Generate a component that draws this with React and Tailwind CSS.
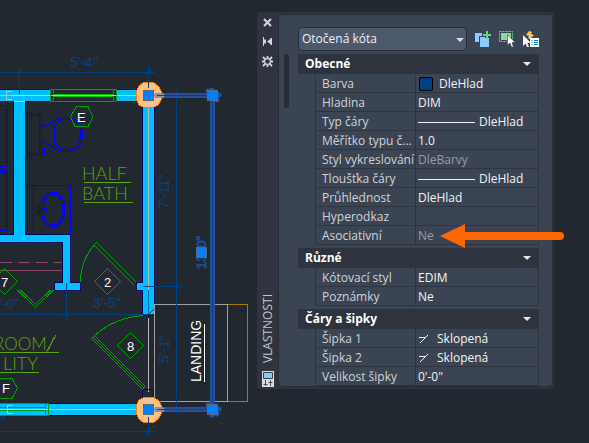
import { useState } from 'react';

const SECTIONS = [
  {
    title: 'Obecné',
    rows: [
      { label: 'Barva', value: 'DleHlad', kind: 'swatch' },
      { label: 'Hladina', value: 'DIM' },
      { label: 'Typ čáry', value: 'DleHlad', kind: 'line' },
      { label: 'Měřítko typu č...', value: '1.0' },
      { label: 'Styl vykreslování', value: 'DleBarvy', muted: true },
      { label: 'Tloušťka čáry', value: 'DleHlad', kind: 'line' },
      { label: 'Průhlednost', value: 'DleHlad' },
      { label: 'Hyperodkaz', value: '' },
      { label: 'Asociativní', value: 'Ne', muted: true, pointer: true },
    ],
  },
  {
    title: 'Různé',
    rows: [
      { label: 'Kótovací styl', value: 'EDIM' },
      { label: 'Poznámky', value: 'Ne' },
    ],
  },
  {
    title: 'Čáry a šipky',
    rows: [
      { label: 'Šipka 1', value: 'Sklopená', kind: 'tick' },
      { label: 'Šipka 2', value: 'Sklopená', kind: 'tick' },
      { label: 'Velikost šipky', value: "0'-0\"" },
    ],
  },
];

const GRID_XS = [10, 22, 34, 47, 59, 71, 84, 96, 108, 119, 131, 168, 180, 192, 204, 221];
const GRID_YS = [81, 109, 395, 423];
const GRIPS = [
  [148, 95],
  [212, 95],
  [201, 252],
  [148, 409],
  [212, 409],
];

function Diamond({ x, y, label }) {
  return (
    <g>
      <path d={`M${x - 13} ${y}L${x} ${y - 13}L${x + 13} ${y}L${x} ${y + 13}Z`} fill="none" stroke="#00a000" />
      <text x={x} y={y + 5} textAnchor="middle" fontSize="13" fill="#fff">
        {label}
      </text>
    </g>
  );
}

function FloorPlan() {
  return (
    <svg
      width="257"
      height="443"
      viewBox="0 0 257 443"
      className="block shrink-0 font-['Liberation_Sans',sans-serif]"
      role="img"
      shapeRendering="crispEdges"
    >
      {/* snap grid */}
      <g fill="#0a4a80">
        {GRID_YS.map((y) => GRID_XS.map((x) => <rect key={`${x}-${y}`} x={x} y={y} width="1" height="1" />))}
      </g>

      {/* walls */}
      <g fill="#00bfff" stroke="#000a60">
        <rect x="-2" y="89.5" width="140" height="12" />
        <rect x="-2" y="403.5" width="140" height="12" />
        <rect x="142.5" y="107.5" width="12" height="208" />
        <path d="M13.5 101V234.5H-2V242.5H62.5V282.5H54.5V290.5H80.5V282.5H70.5V234.5H25.5V101" />
        <path d="M142.5 282.5H136.5V290.5H142.5" />
      </g>
      <path d="M14 101.5H25M148.5 108V290M148.5 318V392" stroke="#b8b8b8" fill="none" />
      <path d="M0 95.5H138M0 409.5H138" stroke="#b4cfd8" />
      <path d="M14 96h11v8h-11z" fill="#00bfff" />
      <path d="M14 95.5H25M14 101.5H25" stroke="#b8d8e0" />
      <path d="M148.5 290V315" stroke="#0073b8" />
      <path d="M142.5 389.5h11v8h-11z" fill="none" stroke="#0a0a58" />

      {/* windows */}
      <g fill="#212830" stroke="#00a000">
        <rect x="50.5" y="89.5" width="66" height="12" />
        <path d="M53.5 90V102M113.5 90V102" />
        <rect x="-2" y="403.5" width="50" height="12" fill="#00bfff" />
        <path d="M45.5 404V415" />
      </g>
      <path d="M54 95.5H113" stroke="#00c000" strokeWidth="3" />
      <path d="M51 95.5H116" stroke="#9fdc9f" />
      <path d="M0 407.5H45M0 410.5H45" stroke="#00a000" />
      <path d="M0 409.5H48" stroke="#b4cfd8" />
      <path d="M12 91.5H6.5V99.5H12M0 95.5H11M13 405.5H7.5V413.5H13" fill="none" stroke="#d0b8b0" />

      {/* fixtures */}
      <g fill="none" stroke="#0000ff">
        <path d="M0 105.5H7.5V166.5H0M5.5 106V166M0 170.5H7.5V230.5H0M0 172.5H5.5V230" />
        <rect x="25.5" y="113.5" width="16" height="42" />
        <rect x="27.5" y="115.5" width="12" height="38" />
        <rect x="41.5" y="148.5" width="3" height="6" />
        <path d="M42 126.5L48 124.5Q58 117.500 66 117.500C77 117.500 82.500 124 82.500 134C82.500 145 77 151.500 66 151.500Q58 151.500 50 145L42 142.500" />
        <path d="M54.5 127V142Q58 149.500 66 149.500C76 149.500 80.500 143 80.500 134C80.500 125 75 119.500 66 119.500Q58 119.500 54.500 127" />
        <rect x="25.5" y="185.5" width="45" height="49" />
        <path d="M33.5 186V234" />
        <ellipse cx="53" cy="209.500" rx="12" ry="17.500" />
        <ellipse cx="53" cy="209.500" rx="10" ry="15.500" />
        <path d="M37.5 205.500H41V213.500H37.500ZM41 208.500H46V211.500H37M39.500 205V214" />
      </g>
      <path d="M0 234.500H14M25 234.500H71" stroke="#000a60" />

      {/* shelf lines */}
      <path d="M0 262.500H12M18 262.500H30M36 262.500H48M54 262.500H62M0 270.500H62" stroke="#8a4a62" />

      {/* doors */}
      <g fill="none" stroke="#00a000">
        <path d="M80.500 282Q80.500 259 96.500 242.500L136.500 282.500M94.500 245.500L134.500 285.500M96.500 242.500L94 245.500" />
        <path d="M17.500 290L35.500 307.500L53.500 290M20.500 290L35.500 304.500L50.500 290" />
        <path d="M143 315.500Q112 318 91.500 338.500L142.500 389.500L145.500 386.500L95.500 336.500M93.500 337.500L144 388" />
        <path d="M76.500 106.500H88L93 117L88 126.500H75L70.500 117Z" />
        <path d="M0 378.500H12L17.500 388L12 398.500H0" />
      </g>
      <text x="77" y="122" fontSize="13" fill="#fff">E</text>
      <text x="2" y="393" fontSize="13" fill="#fff">F</text>
      <Diamond x={4.5} y={281.5} label="7" />
      <Diamond x={107.5} y={281.5} label="2" />
      <Diamond x={130.5} y={345.5} label="8" />

      {/* room names */}
      <g fill="#5ca600" fontSize="18" className="font-['Lato',sans-serif] font-light">
        <text x="82" y="180">HALF</text>
        <text x="82" y="200">BATH</text>
        <text x="-6" y="350" fontSize="17">ROOM</text>
        <text x="47" y="350">/</text>
        <text x="38" y="370" textAnchor="end">LITY</text>
        <path d="M84 182.500H131M84 202.500H133M0 352.500H59M0 372.500H39M46 353L56 335" stroke="#5ca600" />
      </g>

      {/* landing */}
      <path d="M227.500 304.500H247.500V401.500H227.500" fill="none" stroke="#a87800" />
      <rect x="154.500" y="304.500" width="73" height="97" fill="none" stroke="#a0a0a0" />
      <text transform="translate(201 382) rotate(-90)" fontSize="14" fill="#fff">LANDING</text>
      <path d="M204.500 324V382" stroke="#fff" />

      {/* dimensions */}
      <g fill="none" stroke="#004080">
        <path d="M0 72.500H155M19.500 66V94M15 77L25 67M148.500 66V88M143 77L154 67" />
        <path d="M0 314.500H154M66.500 283V321M61 319L71 309M143 320L154 309" />
        <path d="M0 431.500H155M148.500 417V437M143 436L154 426" />
        <path d="M176.500 89V415M171 90L182 101M150 286.500H183M171 281L182 292M171 404L182 415M143 286.500H150" />
      </g>
      <g fill="#0d4080" fontSize="14">
        <text x="70" y="67">5'-4"</text>
        <text x="93" y="308">3'-5"</text>
        <text x="0" y="308" fontSize="13">'-0"</text>
        <text x="1" y="426">"</text>
        <text transform="translate(169 209) rotate(-90)">7'-11"</text>
        <text transform="translate(169 363) rotate(-90)">5'-1"</text>
      </g>

      {/* association markers */}
      <g fill="#ffc080" stroke="#ff8000">
        <path d="M143.500 82.500H153.500L158.500 86.500L161.500 91.500V99.500L158.500 104.500L153.500 107.500H143.500L138.500 104.500L136.500 99.500V91.500L138.500 86.500Z" />
        <path d="M143.500 397.500H153.500L158.500 400.500L161.500 405.500V413.500L158.500 418.500L153.500 422.500H143.500L138.500 418.500L136.500 413.500V405.500L138.500 400.500Z" />
      </g>
      <path d="M148.500 66V88M148.500 417V437" stroke="#004080" />
      <path d="M137 95.500H143M137 409.500H143M148.500 101V107M148.500 398V404" stroke="#d8c8b8" />

      {/* selected dimension */}
      <g fill="none" shapeRendering="auto">
        <path d="M157 95.500H212.500V409.500H157" stroke="#294f99" strokeWidth="5" strokeLinecap="round" />
        <path d="M157 95.500H162M157 409.500H162" stroke="#8c8fae" strokeWidth="5" strokeLinecap="round" />
        <path d="M157 95.500H212.500V409.500H157" stroke="#0c3f83" />
        <path d="M208 91L217 100M212 90V99M212 95H219M208 405L217 414M212 409H219M212 409V415" stroke="#294f99" strokeWidth="5" strokeLinecap="round" />
      </g>
      <text transform="translate(206 269) rotate(-90)" fontSize="13" fill="#2a5fb0" stroke="#22488c" strokeWidth="1">
        13'-0"
      </text>

      {GRIPS.map(([x, y]) => (
        <rect key={`${x}-${y}`} x={x - 4.5} y={y - 4.5} width="10" height="10" fill="#0080ff" stroke="#5c6a7c" />
      ))}
    </svg>
  );
}

function PaletteBar() {
  return (
    <div className="flex w-[21px] shrink-0 flex-col items-center pt-1">
      <button type="button" aria-label="Zavřít">
        <svg width="9" height="9" viewBox="0 0 9 9" className="block" stroke="#d4d6d9" strokeWidth="2">
          <path d="M1 1L8 8M8 1L1 8" />
        </svg>
      </button>
      <button type="button" aria-label="Automaticky skrýt" className="mt-2.5">
        <svg width="9" height="9" viewBox="0 0 9 9" className="block" fill="#d4d6d9">
          <path d="M0 0H1V9H0zM1 2.500H3V6.500H1zM7.500 1H9V8H7.500zM4 4.500L8 1.500V7.500z" />
        </svg>
      </button>
      <button type="button" aria-label="Nastavení" className="mt-2.5">
        <svg width="11" height="11" viewBox="0 0 11 11" className="block" fill="none" stroke="#d4d6d9">
          <circle cx="5.500" cy="5.500" r="2.900" strokeWidth="1.200" />
          <path d="M5.500 0V2.500M5.500 8.500V11M0 5.500H2.500M8.500 5.500H11M1 1L3.500 3.500M7.500 7.500L10 10M10 1L7.500 3.500M3.500 7.500L1 10" strokeWidth="1.800" />
        </svg>
      </button>
      <div className="mt-auto rotate-180 text-xs leading-4 text-[#c3c6cb] [writing-mode:vertical-rl]">VLASTNOSTI</div>
      <svg width="12" height="16" viewBox="0 0 12 16" className="mt-2 block">
        <path d="M0 0H12V16H0z" fill="#dcdcdc" />
        <path d="M1.500 1.500H10.500V7.500H1.500z" fill="#85caff" stroke="#3a4048" />
        <path d="M3.500 9V15M8.500 9V15M1.500 13.500H5.500M6.500 11.500H10.500" stroke="#4a4f57" />
      </svg>
    </div>
  );
}

function Toolbar() {
  return (
    <div className="flex items-center gap-2">
      <div className="relative min-w-0 flex-1">
        <select
          aria-label="Typ objektu"
          className="block h-6 w-full appearance-none rounded-sm border border-[#292e38] bg-[#4c586b] pr-5 pl-[3px] text-xs text-[#f0f1f3]"
        >
          <option>Otočená kóta</option>
        </select>
        <svg width="8" height="4" viewBox="0 0 8 4" className="pointer-events-none absolute top-[11px] right-[3px]">
          <path d="M0 0H8L4 4z" fill="#dcdcdc" />
        </svg>
      </div>
      <button type="button" aria-label="Přepnout hodnotu PICKADD">
        <svg width="16" height="16" viewBox="0 0 16 16" className="block">
          <path d="M0 2H7V11H0z" fill="#8ccbff" />
          <path d="M4 5H14V16H4z" fill="#3b4453" />
          <path d="M5 6H14V16H5z" fill="#8ccbff" />
          <path d="M10 4H14V7H10z" fill="#3b4453" />
          <path d="M11 0H13V3H16V5H13V8H11V5H8V3H11z" fill="#5fd985" />
        </svg>
      </button>
      <button type="button" aria-label="Vybrat objekty">
        <svg width="16" height="16" viewBox="0 0 16 16" className="block">
          <path d="M.5 .5H13.500V10.500H.5z" fill="none" stroke="#5fd985" strokeDasharray="2 1" />
          <path d="M2 2H12V9H2z" fill="#85dc9f" />
          <path d="M8.500 3.500V14L11 12L12.500 16H14.500L13 11.500H16z" fill="#fff" stroke="#3b4453" strokeWidth=".6" />
        </svg>
      </button>
      <button type="button" aria-label="Rychlý výběr">
        <svg width="16" height="16" viewBox="0 0 16 16" className="block">
          <path d="M6 0L9 1L8 3L11 4L7 8L5 7L6 5L3 4z" fill="#ffc860" />
          <path d="M0 4V15L2.500 12.500L4 16H6L4.500 12H8z" fill="#fff" />
          <path d="M7 7H16V16H7z" fill="#fff" />
          <path d="M8.500 9.500H9.500M11 9.500H15M8.500 11.500H9.500M11 11.500H15M8.500 13.500H9.500M11 13.500H15" stroke="#1683dc" />
        </svg>
      </button>
    </div>
  );
}

function PropertyValue({ row }) {
  return (
    <div className="flex items-center">
      {row.kind === 'swatch' && <span className="mr-1.5 ml-px h-3.5 w-3.5 rounded-xs border border-black bg-[#004080]" />}
      {row.kind === 'line' && <span className="mr-1 h-px w-[57px] bg-[#f0f1f3]" />}
      {row.kind === 'tick' && (
        <svg width="10" height="10" viewBox="0 0 10 10" className="mr-2 ml-px" fill="none" stroke="#f0f1f3">
          <path d="M0 3.500H6M1 9L9 1" />
        </svg>
      )}
      <span>{row.value}</span>
      {row.pointer && (
        <svg width="124" height="24" viewBox="0 0 124 24" className="absolute -top-0.5 left-6 z-10 max-w-none" fill="#ff6600">
          <path d="M0 12L25 0V8H120a4 4 0 0 1 0 8H25V24z" />
        </svg>
      )}
    </div>
  );
}

function Section({ section }) {
  const [open, setOpen] = useState(true);

  return (
    <section>
      <button
        type="button"
        aria-expanded={open}
        onClick={() => setOpen(!open)}
        className="flex h-5 w-full items-center justify-between bg-[#2e333e] pr-2 pl-[7px] text-left text-xs font-bold text-white"
      >
        {section.title}
        <svg width="8" height="4" viewBox="0 0 8 4" className={open ? '' : '-rotate-90'}>
          <path d="M0 0H8L4 4z" fill="#e8e8e8" />
        </svg>
      </button>
      {open && (
        <div className="pl-[17px]">
          <table className="w-full table-fixed border-separate border-spacing-0 border-l border-[#2e3440] text-xs leading-4">
            <tbody>
              {section.rows.map((row) => (
                <tr key={row.label}>
                  <th
                    scope="row"
                    className="h-[19px] w-[100px] border-r border-b border-[#2e3440] p-0 pt-0.5 pl-1.5 text-left font-normal whitespace-nowrap text-[#d0d3d8]"
                  >
                    {row.label}
                  </th>
                  <td
                    className={`relative h-[19px] border-r border-b border-[#2e3440] p-0 pt-0.5 pl-0.5 whitespace-nowrap ${
                      row.muted ? 'text-[#969ca6]' : 'text-[#f2f3f5]'
                    }`}
                  >
                    <PropertyValue row={row} />
                  </td>
                </tr>
              ))}
            </tbody>
          </table>
        </div>
      )}
    </section>
  );
}

export default function App() {
  return (
    <main className="flex min-h-screen items-start bg-[#212830] font-['Open_Sans','Noto_Sans',sans-serif]">
      <FloorPlan />
      <aside className="mt-3 mr-[35px] flex min-w-0 flex-1 rounded-sm bg-[#2f3440] pt-0.5 pr-px pb-0.5">
        <PaletteBar />
        <div className="flex min-w-0 flex-1 rounded-sm border border-[#262b35] bg-[#3b4453] pr-[13px] pl-[5px]">
          <div className="mt-[39px] mr-[9px] h-[54px] w-[5px] shrink-0 rounded-full bg-[#282c37]" />
          <div className="flex min-w-0 flex-1 flex-col gap-[3px] pt-3">
            <Toolbar />
            {SECTIONS.map((section) => (
              <Section key={section.title} section={section} />
            ))}
          </div>
        </div>
      </aside>
    </main>
  );
}
